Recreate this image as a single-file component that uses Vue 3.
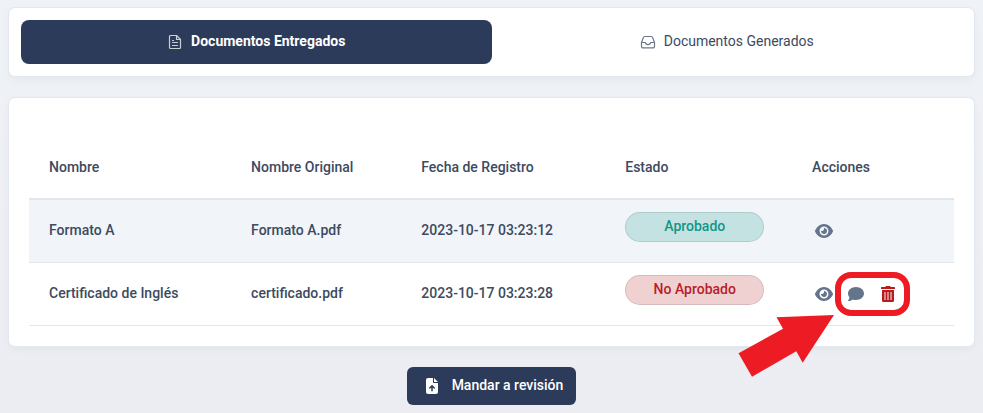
<script setup>
import { ref } from 'vue'

const tab = ref('entregados')
const headers = ['Nombre', 'Nombre Original', 'Fecha de Registro', 'Estado', 'Acciones']
const rows = [
  { nombre: 'Formato A', original: 'Formato A.pdf', fecha: '2023-10-17 03:23:12', estado: 'Aprobado', ok: true },
  { nombre: 'Certificado de Inglés', original: 'certificado.pdf', fecha: '2023-10-17 03:23:28', estado: 'No Aprobado', ok: false },
]
</script>

<template>
  <main class="page">
    <nav class="card tabs">
      <button type="button" class="tab" :class="{ active: tab === 'entregados' }" @click="tab = 'entregados'">
        <svg class="tab-icon" viewBox="0 0 16 16" fill="none" stroke="currentColor" stroke-width="1.2" stroke-linejoin="round" stroke-linecap="round" aria-hidden="true">
          <path d="M9.500 1.500h-6a1 1 0 0 0-1 1v11a1 1 0 0 0 1 1h9a1 1 0 0 0 1-1v-8z" />
          <path d="M9.500 1.500v4h4M5.500 6.500h1M5.500 8.500h5M5.500 11.500h5" />
        </svg>
        <span class="label">Documentos Entregados</span>
      </button>
      <button type="button" class="tab" :class="{ active: tab === 'generados' }" @click="tab = 'generados'">
        <svg class="tab-icon" viewBox="0 0 16 16" fill="none" stroke="currentColor" stroke-width="1.2" stroke-linejoin="round" stroke-linecap="round" aria-hidden="true">
          <path d="M1.500 8.500 3.300 3.600A1.600 1.600 0 0 1 4.800 2.500h6.400a1.600 1.600 0 0 1 1.500 1.100L14.500 8.500v4a1.400 1.400 0 0 1-1.400 1.400H2.900a1.400 1.400 0 0 1-1.400-1.400z" />
          <path d="M1.500 8.500H5.300C5.600 9.900 6.600 10.600 8 10.600s2.400-.7 2.700-2.100h3.800" />
        </svg>
        <span class="label">Documentos Generados</span>
      </button>
    </nav>

    <section class="card list">
      <table>
        <colgroup>
          <col class="c1" /><col class="c2" /><col class="c3" /><col class="c4" /><col class="c5" />
        </colgroup>
        <thead>
          <tr><th v-for="h in headers" :key="h" scope="col">{{ h }}</th></tr>
        </thead>
        <tbody>
          <tr v-for="r in rows" :key="r.nombre">
            <td class="text">{{ r.nombre }}</td>
            <td class="text">{{ r.original }}</td>
            <td class="text">{{ r.fecha }}</td>
            <td class="state"><span class="badge" :class="r.ok ? 'ok' : 'bad'">{{ r.estado }}</span></td>
            <td>
              <div class="actions">
                <button type="button" aria-label="Ver">
                  <svg viewBox="0 0 576 512" width="18" height="16" fill="currentColor" aria-hidden="true">
                    <path d="M288 32c-80.800 0-145.500 36.800-192.600 80.600C48.600 156 17.300 208 2.500 243.700c-3.300 7.900-3.300 16.700 0 24.600C17.300 304 48.600 356 95.400 399.400C142.500 443.200 207.200 480 288 480s145.500-36.800 192.600-80.600c46.800-43.500 78.100-95.400 93-131.100c3.300-7.900 3.300-16.700 0-24.600c-14.900-35.700-46.200-87.700-93-131.100C433.500 68.800 368.800 32 288 32zM144 256a144 144 0 1 1 288 0 144 144 0 1 1-288 0zm144-64c0 35.300-28.700 64-64 64c-7.100 0-13.900-1.200-20.300-3.300c-5.500-1.800-11.900 1.600-11.700 7.400c.3 6.900 1.300 13.800 3.200 20.700c13.700 51.200 66.400 81.600 117.600 67.900s81.600-66.400 67.900-117.600c-11.100-41.500-47.800-69.400-88.600-71.100c-5.800-.2-9.200 6.100-7.400 11.700c2.100 6.400 3.300 13.200 3.300 20.300z" />
                  </svg>
                </button>
                <template v-if="!r.ok">
                  <button type="button" aria-label="Comentario">
                    <svg viewBox="0 0 512 512" width="16" height="16" fill="currentColor" aria-hidden="true">
                      <path d="M512 240c0 114.900-114.600 208-256 208c-37.100 0-72.300-6.400-104.100-17.900c-11.900 8.700-31.300 20.600-54.300 30.600C73.600 471.100 44.700 480 16 480c-6.500 0-12.300-3.900-14.800-9.900s-1.100-12.800 3.400-17.400l.3-.3c.3-.3 .7-.7 1.300-1.400c1.100-1.200 2.800-3.100 4.900-5.700c4.100-5 9.600-12.400 15.200-21.600c10-16.600 19.500-38.400 21.400-62.900C17.700 326.800 0 285.100 0 240C0 125.100 114.600 32 256 32s256 93.100 256 208z" />
                    </svg>
                  </button>
                  <button type="button" class="danger" aria-label="Eliminar">
                    <svg viewBox="0 0 14 16" width="14" height="16" fill="currentColor" aria-hidden="true">
                      <path d="M.6 1h3.500L4.700.3Q5 0 5.400 0h3.200Q9 0 9.300.3L9.900 1h3.500q.6 0 .6.600v.8q0 .6-.6.600H.6Q0 3 0 2.400v-.8Q0 1 .6 1z" />
                      <path d="M1 4h12v10.500q0 1.500-1.500 1.500h-9Q1 16 1 14.500z" />
                      <path class="bars" d="M3.300 6h1.400v8H3.300zM6.300 6h1.400v8H6.300zM9.300 6h1.400v8H9.300z" />
                    </svg>
                  </button>
                  <svg class="callout" viewBox="0 0 172 106" fill="#ed1c24" aria-hidden="true">
                    <rect x="100" y="4" width="69" height="38" rx="13" fill="none" stroke="#ed1c24" stroke-width="6" />
                    <path d="M96 44 38.500 46.300 45 57.700 0.500 82.300 14 105.700 58.300 80.300 64.700 91.700z" />
                  </svg>
                </template>
              </div>
            </td>
          </tr>
        </tbody>
      </table>
    </section>

    <button type="button" class="send">
      <svg viewBox="0 0 384 512" width="12" height="16" fill="currentColor" aria-hidden="true">
        <path d="M64 0C28.700 0 0 28.700 0 64V448c0 35.300 28.700 64 64 64H320c35.300 0 64-28.700 64-64V160H256c-17.700 0-32-14.300-32-32V0H64zM256 0V128H384L256 0zM216 408c0 13.300-10.700 24-24 24s-24-10.700-24-24V305.900l-31 31c-9.400 9.400-24.600 9.400-33.900 0s-9.400-24.600 0-33.900l72-72c9.400-9.400 24.600-9.400 33.900 0l72 72c9.400 9.400 9.400 24.600 0 33.900s-24.600 9.400-33.900 0l-31-31V408z" />
      </svg>
      <span class="label">Mandar a revisión</span>
    </button>
  </main>
</template>

<style>
body {
  background: linear-gradient(#eff2f7, #ecedf2);
  min-height: 100vh;
}
</style>

<style scoped>
.page {
  box-sizing: border-box;
  display: flex;
  flex-direction: column;
  align-items: center;
  padding: 8px 9px;
  font: 500 14px/20px Roboto, sans-serif;
  color: #3d4a60;
}
button {
  font: inherit;
  color: inherit;
  border: 0;
  padding: 0;
  background: none;
  cursor: pointer;
}
svg { display: block; }
.card {
  align-self: stretch;
  background: #fff;
  border-radius: 6px;
  box-shadow: 0 0 0 1px #e2e8f0, 0 3px 10px #0000000d;
}
.tabs {
  display: flex;
  padding: 12px;
  margin-bottom: 22px;
}
.tab {
  flex: 1;
  display: flex;
  align-items: center;
  justify-content: center;
  gap: 8px;
  height: 44px;
  border-radius: 8px;
  font-weight: 400;
}
.tab.active {
  background: #2d3b5a;
  color: #fff;
  font-weight: 700;
}
.label { padding-bottom: 2px; }
.tab-icon {
  width: 16px;
  height: 16px;
  opacity: .75;
}
.list {
  padding: 38px 20px 20px;
  margin-bottom: 21px;
}
table {
  width: 100%;
  table-layout: fixed;
  border-collapse: separate;
  border-spacing: 0;
  text-align: left;
}
.c1 { width: 21.85%; }
.c2 { width: 18.4%; }
.c3 { width: 22.05%; }
.c4 { width: 20.2%; }
.c5 { width: 17.5%; }
th, td {
  box-sizing: border-box;
  height: 63px;
  padding: 0 20px;
  font-weight: 500;
  white-space: nowrap;
  border-bottom: 1px solid #e2e5ea;
}
th {
  height: 64px;
  border-bottom-width: 2px;
}
tbody tr:nth-child(odd) { background: #f1f4f9; }
.text {
  padding-bottom: 2px;
}
.state {
  padding-bottom: 8px;
}
.badge {
  box-sizing: border-box;
  display: block;
  max-width: 139px;
  height: 30px;
  line-height: 27px;
  border: 1px solid #0000001a;
  border-radius: 15px;
  text-align: center;
}
.ok { background: #c4e2e2; color: #139688; }
.bad { background: #f0d1d2; color: #b9202b; }
.actions {
  position: relative;
  display: flex;
  align-items: center;
  gap: 15px;
  padding-left: 3px;
  color: #64748b;
}
.danger {
  color: #b91c1c;
  padding-left: 2px;
}
.bars { fill: #eab0b3; }
.callout {
  position: absolute;
  left: -74px;
  top: -15px;
  width: 172px;
  height: 106px;
  pointer-events: none;
}
.send {
  display: flex;
  align-items: center;
  gap: 14px;
  height: 38px;
  padding: 0 13px 0 19px;
  border-radius: 6px;
  background: #2d3b5a;
  color: #fff;
}
</style>
